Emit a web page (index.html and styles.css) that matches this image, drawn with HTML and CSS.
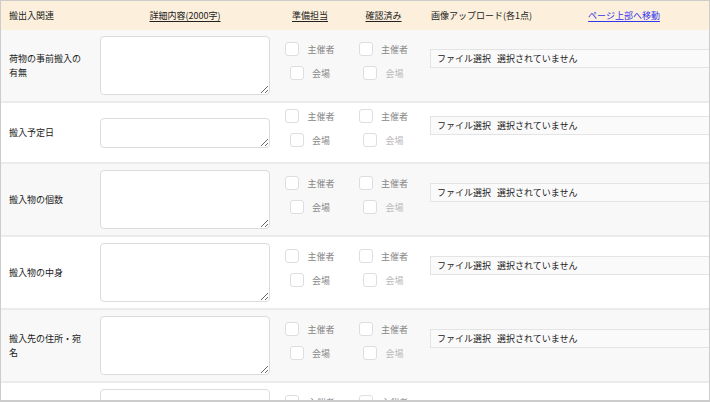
FILE: index.html
```html
<!DOCTYPE html>
<html lang="ja">
<head>
<meta charset="utf-8">
<title>搬出入関連</title>
<link rel="stylesheet" href="styles.css">
</head>
<body>
<div class="table">
  <div class="head">
    <div class="h-label">搬出入関連</div>
    <div class="h-center"><u>詳細内容(2000字)</u></div>
    <div class="h-center"><u>準備担当</u></div>
    <div class="h-center"><u>確認済み</u></div>
    <div class="h-file"><span>画像アップロード(各1点)</span><a class="toplink" href="#">ページ上部へ移動</a></div>
  </div>

  <div class="row alt">
    <div class="label">荷物の事前搬入の有無</div>
    <div class="detail"><textarea class="ta"></textarea></div>
    <div class="checks"><div class="chk"><span class="box"></span><span class="t1">主催者</span></div><div class="chk"><span class="box"></span><span class="t1">会場</span></div></div>
    <div class="checks"><div class="chk"><span class="box"></span><span class="t1">主催者</span></div><div class="chk"><span class="box"></span><span class="t2">会場</span></div></div>
    <div class="filecell"><div class="file"><span>ファイル選択</span><span>選択されていません</span></div></div>
  </div>

  <div class="row">
    <div class="label">搬入予定日</div>
    <div class="detail"><textarea class="ta short"></textarea></div>
    <div class="checks"><div class="chk"><span class="box"></span><span class="t1">主催者</span></div><div class="chk"><span class="box"></span><span class="t1">会場</span></div></div>
    <div class="checks"><div class="chk"><span class="box"></span><span class="t1">主催者</span></div><div class="chk"><span class="box"></span><span class="t2">会場</span></div></div>
    <div class="filecell"><div class="file"><span>ファイル選択</span><span>選択されていません</span></div></div>
  </div>

  <div class="row alt">
    <div class="label">搬入物の個数</div>
    <div class="detail"><textarea class="ta"></textarea></div>
    <div class="checks"><div class="chk"><span class="box"></span><span class="t1">主催者</span></div><div class="chk"><span class="box"></span><span class="t1">会場</span></div></div>
    <div class="checks"><div class="chk"><span class="box"></span><span class="t1">主催者</span></div><div class="chk"><span class="box"></span><span class="t2">会場</span></div></div>
    <div class="filecell"><div class="file"><span>ファイル選択</span><span>選択されていません</span></div></div>
  </div>

  <div class="row">
    <div class="label">搬入物の中身</div>
    <div class="detail"><textarea class="ta"></textarea></div>
    <div class="checks"><div class="chk"><span class="box"></span><span class="t1">主催者</span></div><div class="chk"><span class="box"></span><span class="t1">会場</span></div></div>
    <div class="checks"><div class="chk"><span class="box"></span><span class="t1">主催者</span></div><div class="chk"><span class="box"></span><span class="t2">会場</span></div></div>
    <div class="filecell"><div class="file"><span>ファイル選択</span><span>選択されていません</span></div></div>
  </div>

  <div class="row alt">
    <div class="label">搬入先の住所・宛名</div>
    <div class="detail"><textarea class="ta"></textarea></div>
    <div class="checks"><div class="chk"><span class="box"></span><span class="t1">主催者</span></div><div class="chk"><span class="box"></span><span class="t1">会場</span></div></div>
    <div class="checks"><div class="chk"><span class="box"></span><span class="t1">主催者</span></div><div class="chk"><span class="box"></span><span class="t2">会場</span></div></div>
    <div class="filecell"><div class="file"><span>ファイル選択</span><span>選択されていません</span></div></div>
  </div>

  <div class="row">
    <div class="label"></div>
    <div class="detail"><textarea class="ta"></textarea></div>
    <div class="checks"><div class="chk"><span class="box"></span><span class="t1">主催者</span></div></div>
    <div class="checks"><div class="chk"><span class="box"></span><span class="t1">主催者</span></div></div>
    <div class="filecell"></div>
  </div>
</div>
</body>
</html>
```
FILE: styles.css
```css
html, body {
  margin: 0;
  padding: 0;
}
body {
  width: 710px;
  height: 402px;
  box-sizing: border-box;
  border: 1px solid #cccccc;
  border-bottom-width: 2px;
  overflow: hidden;
  background: #ffffff;
  font-family: "Noto Sans CJK JP", "Noto Sans", sans-serif;
  font-size: 9px;
  color: #222222;
}
.table {
  width: 100%;
}
.head,
.row {
  display: grid;
  grid-template-columns: 89px 190px 60px 87px 1fr;
  align-items: center;
}
.head {
  height: 29px;
  background: #fcf0dd;
  color: #222222;
}
.h-label {
  padding-left: 8px;
}
.h-center {
  text-align: center;
}
.h-center u {
  text-underline-offset: 2px;
}
.h-file {
  display: flex;
  align-items: center;
  padding-left: 4px;
}
.toplink {
  margin-left: 56px;
  color: #3535ee;
  text-underline-offset: 2px;
}
.row {
  background: #ffffff;
  border-bottom: 2px solid #ebebeb;
}
.row.alt {
  background: #f8f8f8;
}
.label {
  padding-left: 8px;
  max-width: 74px;
  line-height: 14px;
  color: #222222;
}
.detail {
  display: flex;
  justify-content: center;
}
.ta {
  display: block;
  box-sizing: border-box;
  width: 170px;
  height: 59px;
  margin: 6px 0;
  border: 1px solid #dcdcdc;
  border-radius: 4px;
  background: #ffffff;
  padding: 0;
}
.ta.short {
  height: 30px;
}
.checks {
  box-sizing: border-box;
  height: 59px;
  padding-top: 6px;
  display: flex;
  flex-direction: column;
  align-items: center;
}
.chk {
  display: flex;
  align-items: center;
  gap: 8px;
  height: 14px;
  margin-bottom: 10px;
}
.box {
  box-sizing: border-box;
  width: 14px;
  height: 14px;
  border: 1px solid #dedede;
  border-radius: 3px;
  background: #ffffff;
}
.t1 {
  color: #888888;
}
.t2 {
  color: #b8b8b8;
}
.filecell {
  box-sizing: border-box;
  height: 59px;
  padding-top: 13px;
  padding-left: 3px;
}
.file {
  box-sizing: border-box;
  height: 19px;
  display: flex;
  align-items: center;
  gap: 6px;
  padding-left: 6px;
  border: 1px solid #e4e4e4;
  border-right: none;
  background: #fafafa;
  color: #222222;
  white-space: nowrap;
}
```
